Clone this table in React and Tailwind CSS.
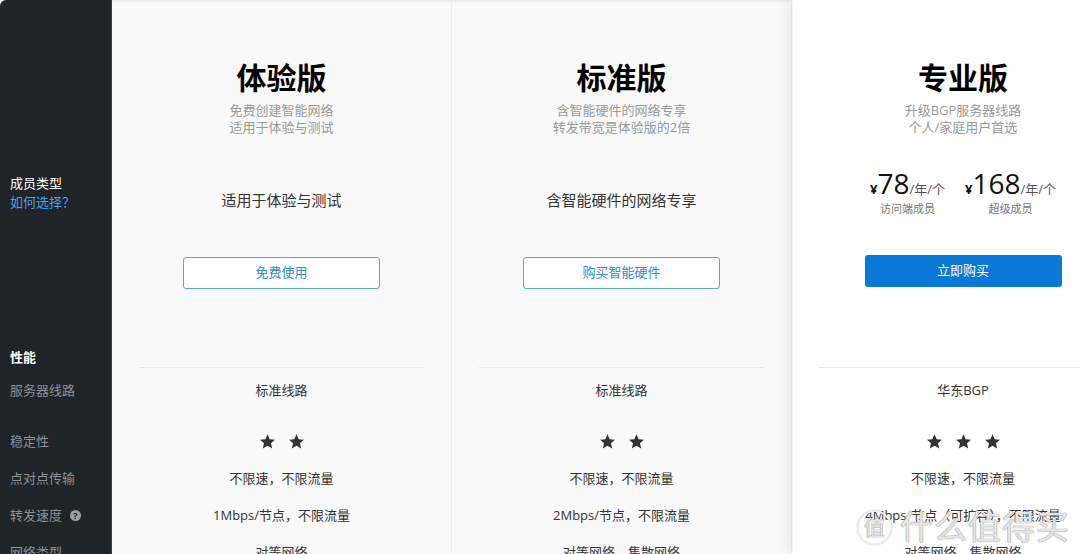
import React from "react";

const font = { fontFamily: '"Open Sans", "Noto Sans CJK SC", sans-serif' };

const Star = () => (
  <svg width="17" height="17" viewBox="0 0 24 24" className="fill-[#333]">
    <path d="M12 1.8l3.1 6.9 7.4.7-5.6 5 1.7 7.4L12 17.9l-6.6 3.9 1.7-7.4-5.6-5 7.4-.7z" />
  </svg>
);

const plans = [
  {
    title: "体验版",
    sub: ["免费创建智能网络", "适用于体验与测试"],
    feature: "适用于体验与测试",
    button: "免费使用",
    rows: ["标准线路", 2, "不限速，不限流量", "1Mbps/节点，不限流量", "对等网络"],
  },
  {
    title: "标准版",
    sub: ["含智能硬件的网络专享", "转发带宽是体验版的2倍"],
    feature: "含智能硬件的网络专享",
    button: "购买智能硬件",
    rows: ["标准线路", 2, "不限速，不限流量", "2Mbps/节点，不限流量", "对等网络、集散网络"],
  },
];

const Rows = ({ rows }) => (
  <div className="flex flex-col items-center text-[13px] text-[#333]">
    <div className="h-[55px] pt-[4px] leading-[37px]">{rows[0]}</div>
    <div className="h-[37px] flex items-center gap-[12px]">
      {Array.from({ length: rows[1] }).map((_, i) => (
        <Star key={i} />
      ))}
    </div>
    {rows.slice(2).map((r) => (
      <div key={r} className="h-[37px] leading-[37px] whitespace-nowrap">
        {r}
      </div>
    ))}
  </div>
);

const Header = ({ title, sub }) => (
  <>
    <div className="text-[30px] leading-[36px] font-bold text-black">{title}</div>
    <div className="mt-[6px] text-[13px] leading-[17px] text-[#999] text-center">
      {sub.map((s) => (
        <div key={s}>{s}</div>
      ))}
    </div>
  </>
);

const Price = ({ value, label }) => (
  <div className="flex flex-col items-center">
    <div className="flex items-baseline text-[#111]">
      <span className="text-[13px] font-bold">¥</span>
      <span className="text-[28px] leading-[30px]">{value}</span>
      <span className="text-[13px] text-[#555]">/年/个</span>
    </div>
    <div className="mt-[1px] text-[11px] text-[#777]">{label}</div>
  </div>
);

export default function App() {
  return (
    <div style={font} className="relative w-[1080px] h-[554px] overflow-hidden flex bg-white">
      {/* sidebar */}
      <div className="w-[112px] shrink-0 bg-[#1e2427] rounded-tl-[6px] border-r border-[#3a4044] pl-[10px]">
        <div className="h-[368px] flex flex-col text-[13px]">
          <div className="pt-[174px] leading-[19px] text-white">成员类型</div>
          <div className="leading-[19px] text-[#4ba0ea]">如何选择？</div>
          <div className="mt-auto mb-[1px] leading-[20px] text-white font-bold">性能</div>
        </div>
        <div className="flex flex-col text-[13px] text-[#8c9195]">
          <div className="h-[55px] pt-[4px] leading-[37px]">服务器线路</div>
          <div className="h-[37px] leading-[37px]">稳定性</div>
          <div className="h-[37px] leading-[37px]">点对点传输</div>
          <div className="h-[37px] leading-[37px] flex items-center gap-[8px]">
            转发速度
            <span className="w-[11px] h-[11px] rounded-full bg-[#9a9ea1] text-[#1e2427] text-[9px] leading-[11px] text-center font-bold">
              ?
            </span>
          </div>
          <div className="h-[37px] leading-[37px]">网络类型</div>
        </div>
      </div>

      {/* free + standard */}
      {plans.map((p) => (
        <div
          key={p.title}
          className="w-[340px] shrink-0 bg-[#f9f9f9] border-t-2 border-t-[#ececec] border-r border-r-[#ececec]"
        >
          <div className="h-[365px] pt-[58px] flex flex-col items-center">
            <Header title={p.title} sub={p.sub} />
            <div className="h-[121px] pt-[54px] text-[15px] leading-[20px] text-[#333]">{p.feature}</div>
            <button className="w-[197px] h-[32px] rounded-[3px] border border-[#5aa5e6] bg-white text-[13px] text-[#2f88da]">
              {p.button}
            </button>
          </div>
          <div className="mx-[27px] border-t border-[#e6e6e6]" />
          <Rows rows={p.rows} />
        </div>
      ))}

      {/* pro */}
      <div className="relative z-10 w-[340px] shrink-0 ml-[1px] bg-white shadow-[-6px_0_12px_rgba(0,0,0,0.06)]">
        <div className="h-[367px] pt-[60px] flex flex-col items-center">
          <Header title="专业版" sub={["升级BGP服务器线路", "个人/家庭用户首选"]} />
          <div className="h-[119px] pt-[32px] flex gap-[20px]">
            <Price value="78" label="访问端成员" />
            <Price value="168" label="超级成员" />
          </div>
          <button className="w-[197px] h-[32px] rounded-[3px] bg-[#0a78d6] text-[13px] text-white">立即购买</button>
        </div>
        <div className="mx-[25px] border-t border-[#e6e6e6]" />
        <Rows rows={["华东BGP", 3, "不限速，不限流量", "4Mbps/节点（可扩容），不限流量", "对等网络、集散网络"]} />
      </div>

      {/* watermark */}
      <div className="absolute z-20 left-[857px] top-[508px] flex items-center gap-[8px] pointer-events-none text-[#f2f2f2]/90 [text-shadow:0_0_1px_#8a8a8a,0_0_1px_#8a8a8a]">
        <div className="w-[35px] h-[35px] rounded-full border-2 border-[#ededed] shadow-[0_0_1px_#8a8a8a] flex items-center justify-center text-[21px] leading-none">
          值
        </div>
        <div className="text-[33px] leading-[38px] tracking-[1px]">什么值得买</div>
      </div>
    </div>
  );
}
